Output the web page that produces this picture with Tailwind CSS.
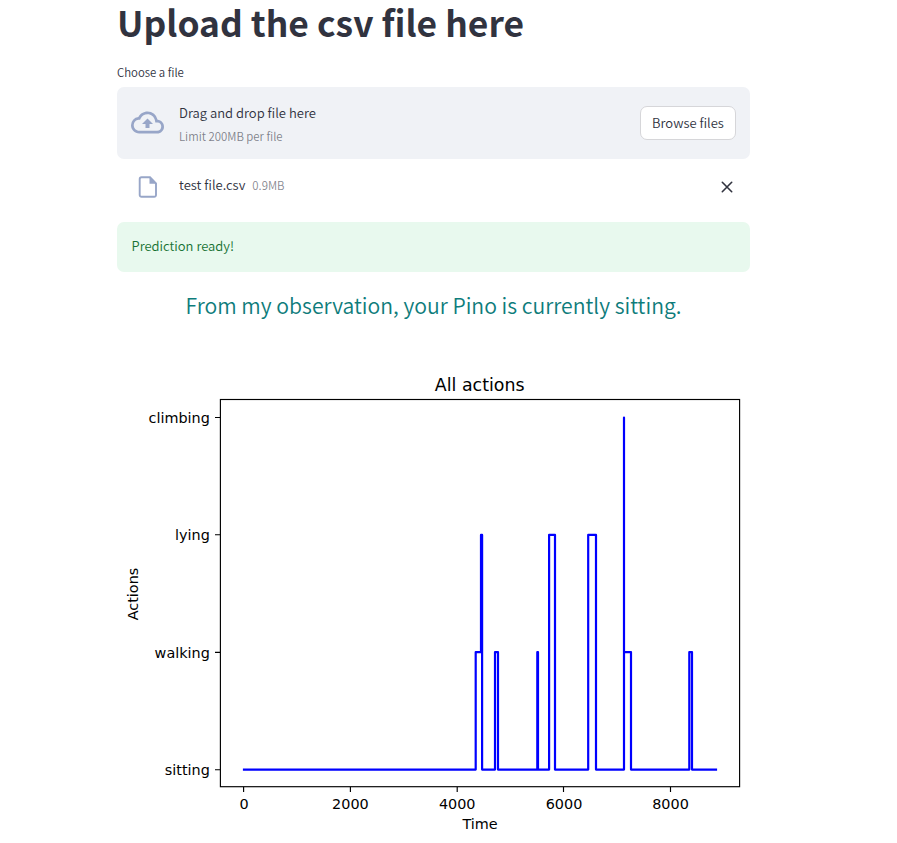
<!DOCTYPE html>
<html lang="en">
<head>
<meta charset="utf-8">
<title>Upload the csv file here</title>
<script src="https://cdn.jsdelivr.net/npm/@tailwindcss/browser@4"></script>
</head>
<body class="bg-white h-[843px] overflow-hidden text-[#31333f] font-[350] font-['Noto_Sans_CJK_SC','Open_Sans',sans-serif]">
<main class="ml-[117px] w-[633px] flex flex-col">
  <h1 class="h-[63px] text-[35.4px] leading-[44px] font-bold whitespace-nowrap">Upload the csv file here</h1>
  <label class="h-[24px] pt-px text-[11.4px] leading-[17px] whitespace-nowrap">Choose a file</label>
  <section class="h-[72px] rounded-[7px] bg-[#f0f2f6] flex items-center px-[14px]">
    <svg class="w-[33px] h-[33px] shrink-0 -mt-[2px]" viewBox="0 0 24 24" fill="#98a6c8"><path d="M19.35 10.04A7.49 7.49 0 0 0 12 4C9.11 4 6.6 5.64 5.35 8.04A5.994 5.994 0 0 0 0 14c0 3.31 2.69 6 6 6h13c2.76 0 5-2.24 5-5 0-2.64-2.05-4.78-4.65-4.96zM19 18H6c-2.21 0-4-1.79-4-4 0-2.05 1.53-3.76 3.56-3.97l1.07-.11.5-.95A5.469 5.469 0 0 1 12 6c2.62 0 4.88 1.86 5.39 4.43l.3 1.5 1.53.11A2.98 2.98 0 0 1 22 15c0 1.65-1.35 3-3 3zM8 13h2.55v3h2.9v-3H16l-4-4z"/></svg>
    <div class="ml-[15px] pt-[4px] flex-1 flex flex-col whitespace-nowrap">
      <span class="text-[13.04px] leading-[23px]">Drag and drop file here</span>
      <span class="text-[11.4px] leading-[25px] text-[#31333f]/60">Limit 200MB per file</span>
    </div>
    <button class="w-[96px] h-[34px] pb-[2px] rounded-[7px] border border-[#d6d6d9] bg-white text-[13px] leading-[23px] whitespace-nowrap">Browse files</button>
  </section>
  <div class="h-[63px] pt-[14px] flex items-start">
    <svg class="ml-[18px] w-[26px] h-[28px] shrink-0" viewBox="0 0 26 28"><path d="M6.5 4.3H15L21 10.300V22a1.800 1.800 0 0 1-1.800 1.800H6.500A1.800 1.800 0 0 1 4.700 22V6.100A1.800 1.800 0 0 1 6.500 4.300Z" fill="none" stroke="#98a6c8" stroke-width="1.900"/><path d="M14.500 4V10.800H21.500Z" fill="#98a6c8"/></svg>
    <span class="ml-[18px] text-[13.04px] leading-[24px] whitespace-nowrap">test file.csv</span>
    <span class="ml-[7px] text-[11.4px] leading-[25px] text-[#31333f]/60 flex-1">0.9MB</span>
    <svg class="mr-[17px] mt-[8px] w-[12px] h-[12px]" viewBox="0 0 12 12" fill="none" stroke="#31333f" stroke-width="1.6" stroke-linecap="round"><path d="M1.300 1.300L10.700 10.700M10.700 1.300L1.300 10.700"/></svg>
  </div>
  <div class="h-[50px] rounded-[7px] bg-[#e8f9ee] px-[14.500px] text-[13px] leading-[47px] text-[#177233]">Prediction ready!</div>
  <p class="h-[73px] pt-[16px] text-center text-[21.170px] leading-[34px] text-[#0e7c7b] whitespace-nowrap">From my observation, your Pino is currently sitting.</p>
  <svg class="w-[633px] h-[498px] block shrink-0 font-normal font-['DejaVu_Sans',sans-serif]" viewBox="117 345 633 498" font-size="14.4" fill="#000">
    <text x="479.700" y="390.500" font-size="17.400" text-anchor="middle">All actions</text>
    <g fill="none" stroke="#000" stroke-width="1.150">
      <rect x="220.400" y="399.500" width="519.200" height="387.200"/>
      <path d="M215 417.500h5M215 534.700h5M215 652.400h5M215 769.700h5M243.600 787v5M350.400 787v5M457.200 787v5M563.500 787v5M670.500 787v5"/>
    </g>
    <g text-anchor="end">
      <text x="209.800" y="423">climbing</text>
      <text x="209.800" y="540.400">lying</text>
      <text x="209.800" y="657.800">walking</text>
      <text x="209.800" y="775.200">sitting</text>
    </g>
    <g text-anchor="middle">
      <text x="244" y="809">0</text>
      <text x="350.400" y="809">2000</text>
      <text x="457.200" y="809">4000</text>
      <text x="564" y="809">6000</text>
      <text x="670.500" y="809">8000</text>
      <text x="480" y="829.400">Time</text>
      <text transform="translate(138.300 594) rotate(-90)">Actions</text>
    </g>
    <path fill="none" stroke="#00f" stroke-width="2.200" stroke-linejoin="round" stroke-linecap="square" d="M244 769.600H475.700V652.200H481V534.900H482.100V769.600H495V652.200H498V769.600H537.300V652.200H538V769.600H549.100V534.900H555V769.600H588.200V534.900H596V769.600H624V417.500V652.200H631V769.600H689.300V652.200H692V769.600H716"/>
  </svg>
</main>
</body>
</html>
